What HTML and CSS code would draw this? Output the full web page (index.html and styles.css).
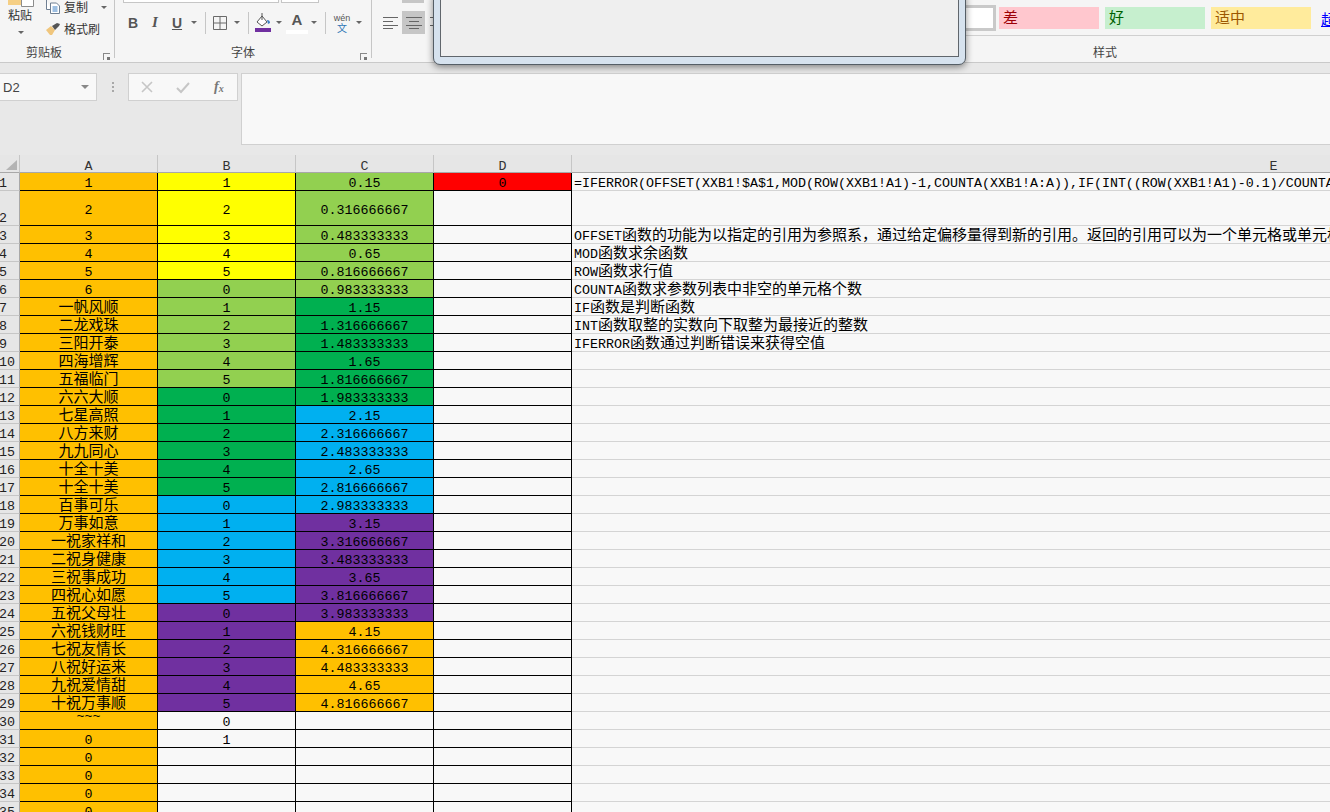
FILE: index.html
```html
<!DOCTYPE html>
<html lang="zh-CN">
<head>
<meta charset="utf-8">
<title>Excel</title>
<link rel="stylesheet" href="styles.css">
</head>
<body>
<header class="ribbon">
  <section class="group g-clip">
    <div class="group-body clip-body">
      <div class="paste">
        <svg class="paste-ico" width="30" height="7" viewBox="0 0 30 7"><rect x="0" y="0" width="14" height="5" fill="#f5cf85"/><path d="M13.5 0v6.5h12V0" fill="#fff" stroke="#8c8c8c"/></svg>
        <span>粘贴</span>
        <i class="arrow"></i>
      </div>
      <div class="clip-cmds">
        <div class="cmd"><svg width="16" height="14" viewBox="0 0 16 14"><path d="M1.500 0v9.500H6M5.500 3v10.500h9V6l-3-3z" fill="#fff" stroke="#6f7f92"/><path d="M7.500 7h5M7.500 9h5M7.500 11h5" stroke="#3b7fc4"/></svg><span>复制</span><i class="arrow a-copy"></i></div>
        <div class="cmd cmd-2"><svg width="16" height="14" viewBox="0 0 16 14"><path d="M1 8l5-4 4 4-3 5H5z" fill="#f0c67d"/><path d="M7 4l5-3 3 1-1 2-4 4z" fill="#555"/></svg><span>格式刷</span></div>
      </div>
    </div>
    <div class="group-label">剪贴板<i class="launch"></i></div>
  </section>

  <section class="group g-font">
    <div class="group-body">
      <div class="top-boxes"><span class="box-font"></span><span class="box-size"></span></div>
      <div class="tools">
        <b class="tb t-b">B</b>
        <em class="tb t-i">I</em>
        <u class="tb t-u">U</u>
        <i class="arrow a-tool"></i>
        <span class="sep"></span>
        <span class="tb t-after"><svg width="14" height="14" viewBox="0 0 14 14"><path d="M.5.500h13v13H.5zM7 .5v13M.5 7h13" fill="none" stroke="#6a6a6a"/></svg></span>
        <i class="arrow a-tool"></i>
        <span class="sep"></span>
        <span class="tb t-fill"><svg width="18" height="20" viewBox="0 0 18 20"><path d="M3 9l5-6 5 6-5 4z" fill="#fff" stroke="#555"/><path d="M8 0v7" stroke="#555"/><path d="M13 7c2 0 3 1 3 3l-2 1z" fill="#3b7fc4"/><rect x="1" y="15" width="16" height="4" fill="#7030a0"/></svg></span>
        <i class="arrow a-tool a-fill"></i>
        <span class="tb t-a">A</span>
        <i class="arrow a-tool"></i>
        <span class="sep"></span>
        <span class="tb t-wen"><small>wén</small><small class="wen-zh">文</small></span>
        <i class="arrow a-tool"></i>
      </div>
    </div>
    <div class="group-label">字体<i class="launch"></i></div>
  </section>

  <section class="group g-align">
    <div class="group-body">
      <div class="top-boxes"><span class="hl-top"></span></div>
      <div class="tools align-tools">
        <span class="al"><svg width="16" height="12" viewBox="0 0 16 12"><path d="M0 .5h15M0 4.500h10M0 8.500h15M0 11.500h10" stroke="#666"/></svg></span>
        <span class="al al-on"><svg width="16" height="12" viewBox="0 0 16 12"><path d="M0 .5h16M3 4.500h10M0 8.500h16M3 11.500h10" stroke="#666"/></svg></span>
        <span class="al"><svg width="16" height="12" viewBox="0 0 16 12"><path d="M1 .5h15M6 4.500h10M1 8.500h15M6 11.500h10" stroke="#666"/></svg></span>
      </div>
    </div>
    <div class="group-label"></div>
  </section>

  <section class="group g-style">
    <div class="group-body style-body">
      <span class="s-blank"></span>
      <span class="s-cell s-bad">差</span>
      <span class="s-cell s-good">好</span>
      <span class="s-cell s-mid">适中</span>
      <a class="s-link">超</a>
    </div>
    <div class="group-label">样式</div>
  </section>
</header>

<div class="dialog"><div class="dialog-inner"></div></div>

<div class="formula-bar">
  <div class="name-box"><span>D2</span><i class="arrow a-name"></i></div>
  <div class="dots"></div>
  <div class="fx-btns">
    <svg width="14" height="14" viewBox="0 0 14 14"><path d="M2 2l10 10M12 2L2 12" stroke="#c6c6c6" stroke-width="1.6"/></svg>
    <svg width="14" height="14" viewBox="0 0 14 14"><path d="M1 8l4 4 8-9" fill="none" stroke="#c6c6c6" stroke-width="2"/></svg>
    <span class="fx">f<sub>x</sub></span>
  </div>
  <div class="formula-input"></div>
</div>

<table class="sheet">
<thead>
<tr><th class="corner"><span class="tri"></span></th><th>A</th><th>B</th><th>C</th><th>D</th><th class="hE">E</th></tr>
</thead>
<tbody>
<tr><th>1</th><td class="o">1</td><td class="y">1</td><td class="g">0.15</td><td class="r">0</td><td class="e">=IFERROR(OFFSET(XXB1!$A$1,MOD(ROW(XXB1!A1)-1,COUNTA(XXB1!A:A)),IF(INT((ROW(XXB1!A1)-0.1)/COUNTA(XXB1!A:A))</td></tr>
<tr class="tall"><th>2</th><td class="o">2</td><td class="y">2</td><td class="g">0.316666667</td><td></td><td class="e"></td></tr>
<tr><th>3</th><td class="o">3</td><td class="y">3</td><td class="g">0.483333333</td><td></td><td class="e">OFFSET<span class="zh">函数的功能为以指定的引用为参照系，通过给定偏移量得到新的引用。返回的引用可以为一个单元格或单元格区域</span></td></tr>
<tr><th>4</th><td class="o">4</td><td class="y">4</td><td class="g">0.65</td><td></td><td class="e">MOD<span class="zh">函数求余函数</span></td></tr>
<tr><th>5</th><td class="o">5</td><td class="y">5</td><td class="g">0.816666667</td><td></td><td class="e">ROW<span class="zh">函数求行值</span></td></tr>
<tr><th>6</th><td class="o">6</td><td class="g">0</td><td class="g">0.983333333</td><td></td><td class="e">COUNTA<span class="zh">函数求参数列表中非空的单元格个数</span></td></tr>
<tr><th>7</th><td class="o"><span class="zh">一帆风顺</span></td><td class="g">1</td><td class="d">1.15</td><td></td><td class="e">IF<span class="zh">函数是判断函数</span></td></tr>
<tr><th>8</th><td class="o"><span class="zh">二龙戏珠</span></td><td class="g">2</td><td class="d">1.316666667</td><td></td><td class="e">INT<span class="zh">函数取整的实数向下取整为最接近的整数</span></td></tr>
<tr><th>9</th><td class="o"><span class="zh">三阳开泰</span></td><td class="g">3</td><td class="d">1.483333333</td><td></td><td class="e">IFERROR<span class="zh">函数通过判断错误来获得空值</span></td></tr>
<tr><th>10</th><td class="o"><span class="zh">四海增辉</span></td><td class="g">4</td><td class="d">1.65</td><td></td><td class="e"></td></tr>
<tr><th>11</th><td class="o"><span class="zh">五福临门</span></td><td class="g">5</td><td class="d">1.816666667</td><td></td><td class="e"></td></tr>
<tr><th>12</th><td class="o"><span class="zh">六六大顺</span></td><td class="d">0</td><td class="d">1.983333333</td><td></td><td class="e"></td></tr>
<tr><th>13</th><td class="o"><span class="zh">七星高照</span></td><td class="d">1</td><td class="b">2.15</td><td></td><td class="e"></td></tr>
<tr><th>14</th><td class="o"><span class="zh">八方来财</span></td><td class="d">2</td><td class="b">2.316666667</td><td></td><td class="e"></td></tr>
<tr><th>15</th><td class="o"><span class="zh">九九同心</span></td><td class="d">3</td><td class="b">2.483333333</td><td></td><td class="e"></td></tr>
<tr><th>16</th><td class="o"><span class="zh">十全十美</span></td><td class="d">4</td><td class="b">2.65</td><td></td><td class="e"></td></tr>
<tr><th>17</th><td class="o"><span class="zh">十全十美</span></td><td class="d">5</td><td class="b">2.816666667</td><td></td><td class="e"></td></tr>
<tr><th>18</th><td class="o"><span class="zh">百事可乐</span></td><td class="b">0</td><td class="b">2.983333333</td><td></td><td class="e"></td></tr>
<tr><th>19</th><td class="o"><span class="zh">万事如意</span></td><td class="b">1</td><td class="p">3.15</td><td></td><td class="e"></td></tr>
<tr><th>20</th><td class="o"><span class="zh">一祝家祥和</span></td><td class="b">2</td><td class="p">3.316666667</td><td></td><td class="e"></td></tr>
<tr><th>21</th><td class="o"><span class="zh">二祝身健康</span></td><td class="b">3</td><td class="p">3.483333333</td><td></td><td class="e"></td></tr>
<tr><th>22</th><td class="o"><span class="zh">三祝事成功</span></td><td class="b">4</td><td class="p">3.65</td><td></td><td class="e"></td></tr>
<tr><th>23</th><td class="o"><span class="zh">四祝心如愿</span></td><td class="b">5</td><td class="p">3.816666667</td><td></td><td class="e"></td></tr>
<tr><th>24</th><td class="o"><span class="zh">五祝父母壮</span></td><td class="p">0</td><td class="p">3.983333333</td><td></td><td class="e"></td></tr>
<tr><th>25</th><td class="o"><span class="zh">六祝钱财旺</span></td><td class="p">1</td><td class="o">4.15</td><td></td><td class="e"></td></tr>
<tr><th>26</th><td class="o"><span class="zh">七祝友情长</span></td><td class="p">2</td><td class="o">4.316666667</td><td></td><td class="e"></td></tr>
<tr><th>27</th><td class="o"><span class="zh">八祝好运来</span></td><td class="p">3</td><td class="o">4.483333333</td><td></td><td class="e"></td></tr>
<tr><th>28</th><td class="o"><span class="zh">九祝爱情甜</span></td><td class="p">4</td><td class="o">4.65</td><td></td><td class="e"></td></tr>
<tr><th>29</th><td class="o"><span class="zh">十祝万事顺</span></td><td class="p">5</td><td class="o">4.816666667</td><td></td><td class="e"></td></tr>
<tr><th>30</th><td class="o tilde">~~~</td><td>0</td><td></td><td></td><td class="e"></td></tr>
<tr><th>31</th><td class="o">0</td><td>1</td><td></td><td></td><td class="e"></td></tr>
<tr><th>32</th><td class="o">0</td><td></td><td></td><td></td><td class="e"></td></tr>
<tr><th>33</th><td class="o">0</td><td></td><td></td><td></td><td class="e"></td></tr>
<tr><th>34</th><td class="o">0</td><td></td><td></td><td></td><td class="e"></td></tr>
<tr><th>35</th><td class="o">0</td><td></td><td></td><td></td><td class="e"></td></tr>
</tbody>
</table>
</body>
</html>
```

FILE: styles.css
```css
* { box-sizing: border-box; }
html, body { margin: 0; height: 812px; overflow: hidden; }
body {
  position: relative;
  width: 1330px;
  background: #f8f8f8;
  font-family: "Liberation Sans", "Noto Sans CJK SC", sans-serif;
  color: #333;
}

/* ribbon */
.ribbon {
  display: flex;
  height: 63px;
  background: #f5f5f5;
  border-bottom: 1px solid #c9c9c9;
  overflow: hidden;
  font-family: "Noto Sans CJK SC", sans-serif;
  font-size: 12px;
}
.group { display: flex; flex-direction: column; flex: none; border-right: 1px solid #c6c6c6; height: 58px; }
.g-clip { width: 115px; }
.g-font { width: 257px; }
.g-align { width: 508px; border-right: 0; }
.g-style { width: 450px; border-right: 0; }
.group-body { height: 43px; flex: none; }
.group-label {
  position: relative;
  height: 18px;
  line-height: 18px;
  text-align: center;
  color: #444;
}
.g-clip .group-label { padding-right: 26px; }
.launch {
  position: absolute;
  right: 4px;
  bottom: 1px;
  width: 7px;
  height: 7px;
  border-left: 1px solid #888;
  border-top: 1px solid #888;
}
.launch::after {
  content: "";
  position: absolute;
  right: 0;
  bottom: 0;
  width: 3px;
  height: 3px;
  background: #777;
}
.arrow {
  display: inline-block;
  width: 0;
  height: 0;
  border-left: 3px solid transparent;
  border-right: 3px solid transparent;
  border-top: 3px solid #666;
  flex: none;
}

/* clipboard */
.clip-body { display: flex; }
.paste {
  width: 45px;
  padding-left: 8px;
  display: flex;
  flex-direction: column;
  font-size: 12px;
  color: #333;
}
.paste-ico { display: block; }
.paste span { line-height: 16px; }
.paste .arrow { margin: 8px 0 0 10px; }
.clip-cmds { display: flex; flex-direction: column; }
.cmd { display: flex; align-items: center; gap: 3px; height: 14px; line-height: 14px; color: #333; }
.cmd-2 { margin-top: 8px; }
.a-copy { margin-left: 10px; }

/* font tools */
.top-boxes { display: flex; height: 3px; padding-left: 8px; gap: 2px; }
.box-font, .box-size { display: block; height: 3px; background: #fff; border-bottom: 1px solid #c6c6c6; border-left: 1px solid #c6c6c6; border-right: 1px solid #c6c6c6; }
.box-font { width: 156px; }
.box-size { width: 38px; }
.tools { display: flex; align-items: center; height: 23px; margin-top: 8px; padding-left: 7px; }
.tb {
  width: 22px;
  flex: none;
  text-align: center;
  font-family: "Liberation Sans", sans-serif;
  font-size: 14px;
  color: #555;
  display: flex;
  justify-content: center;
  align-items: center;
}
.t-u { text-decoration: underline; font-weight: 700; }
.t-i { font-family: "Liberation Serif", serif; font-size: 15px; font-weight: 700; }
.tools > .arrow { margin: 0 3px; }
.tools > .a-fill { margin: 0 2px; }
.sep { width: 1px; height: 22px; background: #c6c6c6; margin: 0 5px; flex: none; }
.t-after { margin-left: -2px; }
.t-fill { margin-left: -2px; }
.t-a { font-weight: 700; font-size: 15px; margin-left: 2px; height: 23px; padding-bottom: 2px; border-bottom: 4px solid #fff; background-clip: padding-box; }
.t-wen { flex-direction: column; line-height: 9px; color: #555; }
.t-wen small { font-size: 9px; }
.t-wen .wen-zh { color: #2e75b6; font-family: "Noto Sans CJK SC", sans-serif; font-size: 10px; }

/* alignment */
.g-align .top-boxes { padding-left: 30px; }
.hl-top { display: block; width: 22px; height: 3px; background: #c6c6c6; }
.al { width: 23px; height: 23px; display: flex; align-items: center; justify-content: center; flex: none; }
.al-on { background: #c6c6c6; }

/* styles */
.style-body { display: flex; align-items: center; gap: 6px; height: 36px; padding: 9px 0 4px 74px; border-bottom: 1px solid #d0d0d0; margin-bottom: 7px; }
.s-blank { width: 42px; height: 26px; margin-top: -4px; background: #fff; border: 3px solid #c9c9c9; flex: none; margin-right: -3px; }
.s-cell { width: 100px; height: 22px; line-height: 20px; padding-left: 4px; flex: none; font-size: 15px; margin-top: -4px; }
.s-bad { background: #ffc7ce; color: #9c0006; }
.s-good { background: #c6efce; color: #006100; }
.s-mid { background: #ffeb9c; color: #9c5700; }
.s-link { color: #0000ff; text-decoration: underline; font-size: 15px; margin-left: 4px; margin-top: -4px; }

/* dialog overlay */
.dialog {
  position: absolute;
  left: 433px;
  top: -6px;
  width: 533px;
  height: 71px;
  padding: 0 6px 7px;
  background: #d6e2ee;
  border: 1px solid #555e66;
  border-radius: 0 0 7px 7px;
  box-shadow: 0 2px 7px rgba(0, 0, 0, .45);
  z-index: 2;
}
.dialog-inner { height: 100%; background: #efefef; border: 1px solid #60666c; }

/* formula bar */
.formula-bar {
  display: flex;
  align-items: flex-start;
  height: 92px;
  padding-top: 10px;
  background: #e8e8e8;
}
.name-box {
  width: 98px;
  height: 28px;
  margin-left: -1px;
  padding: 0 7px 0 3px;
  display: flex;
  align-items: center;
  justify-content: space-between;
  background: #f8f8f8;
  border: 1px solid #d0d0d0;
  font-size: 13px;
  color: #444;
}
.a-name { border-left-width: 4px; border-right-width: 4px; border-top-width: 4px; border-top-color: #888; }
.dots {
  width: 2px;
  height: 10px;
  margin: 9px 14px 0 15px;
  background: repeating-linear-gradient(#a8a8a8 0 2px, transparent 2px 4px);
}
.fx-btns {
  width: 110px;
  height: 28px;
  display: flex;
  align-items: center;
  gap: 22px;
  padding: 0 0 0 11px;
  background: #f8f8f8;
  border: 1px solid #d0d0d0;
}
.fx { margin-left: 2px; font-family: "Liberation Serif", serif; font-style: italic; font-weight: 700; font-size: 14px; color: #777; }
.fx sub { font-size: 10px; vertical-align: -1px; }
.formula-input {
  flex: 1;
  height: 72px;
  margin-left: 3px;
  margin-right: -2px;
  background: #f8f8f8;
  border: 1px solid #d0d0d0;
}

/* sheet */
.sheet {
  table-layout: fixed;
  border-collapse: separate;
  border-spacing: 0;
  width: 1976px;
  font-family: "Liberation Mono", "Noto Sans CJK SC", monospace;
  font-size: 13.33px;
  color: #000;
}
.sheet th, .sheet td {
  height: 18px;
  padding: 0;
  line-height: 12px;
  overflow: hidden;
  white-space: nowrap;
  font-weight: 400;
}
.sheet thead th {
  height: 18px;
  line-height: 11px;
  padding-top: 6px;
  text-align: center;
  background: #e6e6e6;
  color: #333;
  border-right: 1px solid #c6c6c6;
  border-bottom: 1px solid #a8a8a8;
  width: 138px;
  vertical-align: middle;
}
.sheet thead th.corner { width: 20px; padding-top: 0; }
.sheet thead th.hE { width: 1404px; }
.tri {
  display: block;
  width: 0;
  height: 0;
  margin: 3px 0 0 6px;
  border-left: 11px solid transparent;
  border-bottom: 10px solid #b4b4b4;
}
.sheet tbody th {
  background: #e6e6e6;
  color: #222;
  text-align: left;
  text-indent: -1px;
  vertical-align: bottom;
  padding-bottom: 0;
  border-right: 1px solid #a8a8a8;
  border-bottom: 1px solid #c6c6c6;
}
.sheet td {
  padding-top: 5px;
  text-align: center;
  vertical-align: middle;
  background: #f8f8f8;
  border-right: 1px solid #000;
  border-bottom: 1px solid #000;
}
.sheet tr.tall th, .sheet tr.tall td { height: 35px; }
.sheet td.e {
  text-align: left;
  padding-left: 2px;
  border-right: 1px solid #d4d4d4;
  border-bottom: 1px solid #d4d4d4;
}
.zh { font-family: "Noto Sans CJK SC", sans-serif; font-size: 15px; line-height: 0; }
.sheet td.tilde { vertical-align: top; padding-top: 0; line-height: 10px; }
.sheet td.o { background: #ffc000; }
.sheet td.y { background: #ffff00; }
.sheet td.g { background: #92d050; }
.sheet td.d { background: #00b050; }
.sheet td.b { background: #00b0f0; }
.sheet td.p { background: #7030a0; }
.sheet td.r { background: #ff0000; }
```
